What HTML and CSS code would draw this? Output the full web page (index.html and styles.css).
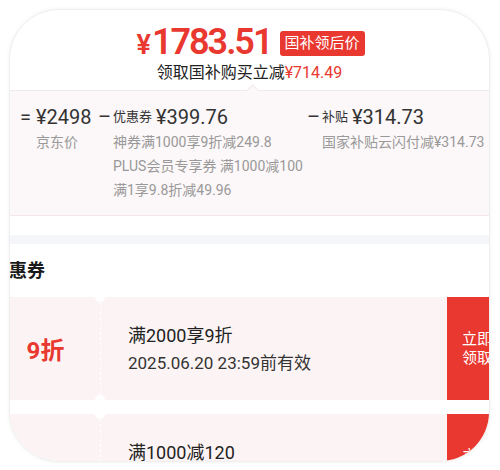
FILE: index.html
```html
<!DOCTYPE html>
<html lang="zh-CN">
<head>
    <meta charset="UTF-8">
    <meta name="viewport" content="width=device-width, initial-scale=1.0">
    <title>国补领后价</title>
    <link rel="stylesheet" href="styles.css">
</head>
<body>
    <div class="sheet">
        <!-- Price header -->
        <div class="price-head">
            <div class="price-row">
                <span class="price"><span class="yen">¥</span>1783.51</span>
                <span class="price-tag">国补领后价</span>
            </div>
            <div class="price-sub">领取国补购买立减<span class="red">¥714.49</span></div>
        </div>

        <!-- Price breakdown -->
        <div class="breakdown">
            <div class="part part-base">
                <div class="part-main"><span class="sign">=</span><span class="amount">¥2498</span></div>
                <div class="part-note">京东价</div>
            </div>
            <div class="part part-coupon">
                <div class="part-main"><span class="sign">–</span><span class="label">优惠券</span><span class="amount">¥399.76</span></div>
                <div class="part-note">神券满1000享9折减249.8</div>
                <div class="part-note">PLUS会员专享券 满1000减100</div>
                <div class="part-note">满1享9.8折减49.96</div>
            </div>
            <div class="part part-subsidy">
                <div class="part-main"><span class="sign">–</span><span class="label">补贴</span><span class="amount">¥314.73</span></div>
                <div class="part-note">国家补贴云闪付减¥314.73</div>
            </div>
        </div>

        <div class="band"></div>

        <!-- Coupons -->
        <div class="coupons">
            <h3 class="coupons-title">优惠券</h3>
            <div class="coupon">
                <div class="coupon-value">9折</div>
                <div class="coupon-info">
                    <div class="coupon-rule">满2000享9折</div>
                    <div class="coupon-date">2025.06.20 23:59前有效</div>
                </div>
                <button class="coupon-btn">立即<br>领取</button>
            </div>
            <div class="coupon">
                <div class="coupon-value"></div>
                <div class="coupon-info">
                    <div class="coupon-rule">满1000减120</div>
                    <div class="coupon-date">2025.06.20 23:59前有效</div>
                </div>
                <button class="coupon-btn">立即<br>领取</button>
            </div>
        </div>
    </div>
</body>
</html>
```

FILE: styles.css
```css
body {
    margin: 0;
    padding: 0;
    width: 500px;
    height: 470px;
    overflow: hidden;
    background: #fff;
    font-family: Roboto, "Noto Sans CJK SC", sans-serif;
    color: #222;
}
.sheet {
    box-sizing: border-box;
    margin: 9px 10px 0 9px;
    height: 453px;
    border: 1px solid #efefef;
    border-radius: 50px;
    box-shadow: 0 0 4px rgba(0, 0, 0, 0.06);
    background: #fff;
    overflow: hidden;
}
.red {
    color: #e8382f;
}

/* header */
.price-head {
    padding: 14px 0 6px;
    text-align: center;
}
.price-row {
    display: flex;
    justify-content: center;
    align-items: center;
    height: 38px;
    margin-left: 2px;
}
.price {
    color: #e8382f;
    font-size: 36px;
    font-weight: 600;
    letter-spacing: -2px;
    line-height: 38px;
}
.yen {
    font-size: 27px;
    margin-right: 3px;
}
.price-tag {
    margin-left: 8px;
    padding: 0 5px;
    height: 25px;
    line-height: 25px;
    background: #e8382f;
    color: #fff;
    font-size: 15px;
    border-radius: 3px;
}
.price-sub {
    font-size: 16px;
    line-height: 22px;
    color: #222;
}

/* breakdown */
.breakdown {
    position: relative;
    display: flex;
    padding: 13px 0 13px 10px;
    background: #fcf7f8;
    border-top: 1px solid #f1eaea;
    border-bottom: 1px solid #f5e6e8;
}
.breakdown::before {
    content: "";
    position: absolute;
    top: -5px;
    left: 238px;
    width: 8px;
    height: 8px;
    background: #fcf7f8;
    border-top: 1px solid #f1eaea;
    border-left: 1px solid #f1eaea;
    transform: rotate(45deg);
}
.part-base {
    width: 78px;
}
.part-coupon {
    width: 209px;
}
.part-subsidy {
    flex: 1;
}
.part-main {
    display: flex;
    align-items: center;
    height: 26px;
    line-height: 26px;
    color: #333;
}
.sign {
    width: 16px;
    font-size: 20px;
}
.part-coupon .sign, .part-subsidy .sign {
    width: 15px;
}
.label {
    font-size: 13px;
    margin-right: 4px;
}
.amount {
    font-size: 20px;
}
.part-note {
    padding-left: 15px;
    font-size: 14px;
    line-height: 24px;
    color: #999;
    white-space: nowrap;
}
.part-base .part-note {
    padding-left: 16px;
}

.band {
    margin-top: 19px;
    height: 9px;
    background: #f5f6fa;
}

/* coupons */
.coupons {
    margin-left: -19px;
}
.coupons-title {
    margin: 14px 0 13px;
    font-size: 18px;
    font-weight: 600;
    line-height: 26px;
    color: #1a1a1a;
}
.coupon {
    display: flex;
    width: 516px;
    height: 103px;
    margin-bottom: 14px;
    background: #fcf4f4;
}
.coupon-value {
    width: 109px;
    display: flex;
    align-items: center;
    justify-content: center;
    color: #e8382f;
    font-size: 24px;
    font-weight: 700;
}
.coupon-info {
    position: relative;
    flex: 1;
    padding: 26px 0 0 27px;
    border-left: 1px dashed #fff;
}
.coupon-info::before, .coupon-info::after {
    content: "";
    position: absolute;
    left: -6px;
    width: 10px;
    height: 10px;
    border-radius: 50%;
    background: #fff;
}
.coupon-info::before {
    top: -5px;
}
.coupon-info::after {
    bottom: -5px;
}
.coupon-rule {
    font-size: 18px;
    line-height: 26px;
    color: #222;
}
.coupon-date {
    margin-top: 1px;
    font-size: 17px;
    line-height: 26px;
    color: #333;
}
.coupon-btn {
    width: 60px;
    padding: 0;
    border: none;
    background: #e8382f;
    color: #fff;
    font-family: inherit;
    font-size: 15px;
    line-height: 19px;
    cursor: pointer;
}
```
